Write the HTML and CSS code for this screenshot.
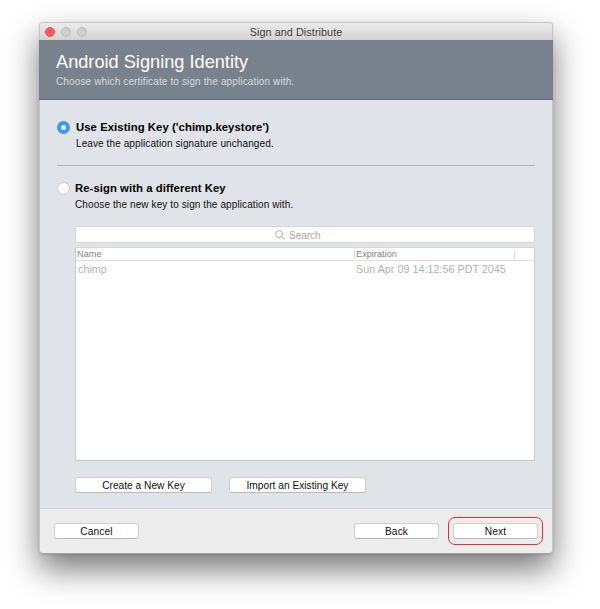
FILE: index.html
```html
<!DOCTYPE html>
<html lang="en">
<head>
<meta charset="utf-8">
<title>Sign and Distribute</title>
<link rel="stylesheet" href="styles.css">
</head>
<body>
<main class="window">
  <div class="titlebar">
    <div class="lights"><span class="light close"></span><span class="light"></span><span class="light"></span></div>
    <span class="title">Sign and Distribute</span>
  </div>
  <header class="header">
    <h1>Android Signing Identity</h1>
    <p>Choose which certificate to sign the application with.</p>
  </header>
  <section class="content">
    <div class="option existing">
      <span class="radio checked"></span>
      <div>
        <h2>Use Existing Key ('chimp.keystore')</h2>
        <p>Leave the application signature unchanged.</p>
      </div>
    </div>
    <hr>
    <div class="option resign">
      <span class="radio"></span>
      <div>
        <h2>Re-sign with a different Key</h2>
        <p>Choose the new key to sign the application with.</p>
      </div>
    </div>
    <div class="keys">
      <div class="search">
        <svg width="10" height="10" viewBox="0 0 10 10" fill="none" stroke="#a6a6a6" stroke-width="0.9"><circle cx="4.1" cy="4.1" r="3.5"/><path d="M6.6 6.6 9.5 9.5"/></svg>
        <span>Search</span>
      </div>
      <div class="table">
        <div class="row head"><span>Name</span><span class="expiration">Expiration</span><span class="end"></span></div>
        <div class="row entry"><span>chimp</span><span class="date">Sun Apr 09 14:12:56 PDT 2045</span></div>
      </div>
      <div class="actions">
        <button class="wide create">Create a New Key</button>
        <button class="wide import">Import an Existing Key</button>
      </div>
    </div>
  </section>
  <footer class="footer">
    <button class="cancel">Cancel</button>
    <button class="back">Back</button>
    <div class="highlight"><button class="next">Next</button></div>
  </footer>
</main>
</body>
</html>
```
FILE: styles.css
```css
* { box-sizing: border-box; }
body {
  margin: 0;
  height: 609px;
  overflow: hidden;
  padding: 22px 0 0 39px;
  background: #fff;
  font-family: "Liberation Sans", Arial, sans-serif;
  color: #111;
}
h1, h2, p { margin: 0; font-weight: normal; white-space: nowrap; }
.window {
  width: 514px;
  height: 532px;
  display: flex;
  flex-direction: column;
  border: 1px solid #c4c5c7;
  border-bottom-color: #a6a6a6;
  border-radius: 4px;
  background: #ececec;
  background-clip: padding-box;
  box-shadow: 0 15px 32px rgba(0, 0, 0, .54), 0 1px 2px rgba(0, 0, 0, .12);
}
.titlebar {
  height: 17px;
  display: grid;
  grid-template-columns: 60px 1fr 60px;
  align-items: center;
  background: linear-gradient(#ececec, #d2d2d2);
  border-radius: 3px 3px 0 0;
}
.lights { display: flex; gap: 6px; padding-left: 5px; }
.light {
  width: 10px;
  height: 10px;
  border-radius: 50%;
  background: #cdcdcd;
  border: 1px solid #bfbfbf;
}
.close { background: #fc5b57; border-color: #f0524f; }
.title { text-align: center; font-size: 10.8px; line-height: 12px; letter-spacing: .08px; color: #404040; }
.header {
  height: 60px;
  margin: 0 -1px;
  padding: 10px 17px 0;
  background: #78828c;
  border-bottom: 1px solid #66717d;
}
.header h1 { font-size: 18.2px; line-height: 24px; color: #fff; }
.header p { margin-top: 1px; font-size: 10px; line-height: 14px; letter-spacing: .13px; color: #d4dadf; }
.content { height: 409px; padding: 20px 17px 0; background: #e0e3e8; border-bottom: 1px solid #d2d4d8; }
.option { display: flex; gap: 6px; }
.radio {
  width: 13px;
  height: 13px;
  margin-top: 1px;
  border: 1px solid #c6c8cb;
  border-radius: 50%;
  background: #fff;
}
.checked { border: 4px solid #3b99fc; }
.option h2 { font-size: 11.3px; line-height: 15px; font-weight: bold; letter-spacing: .07px; color: #000; }
.option p { margin-top: 2px; font-size: 10px; line-height: 14px; letter-spacing: .1px; }
hr { height: 1px; margin: 14px 0 15px; border: 0; background: #b2b6bb; }
.option.resign { gap: 5px; }
.keys { width: 460px; margin: 14px 0 0 18px; }
.search {
  height: 17px;
  display: flex;
  align-items: center;
  padding: 1px 0 0 199px;
  gap: 4px;
  border: 1px solid #d5d7da;
  border-radius: 2px;
  background: #fff;
  font-size: 10px;
  color: #a9a9a9;
}
.table { height: 214px; margin-top: 4px; border: 1px solid #c8cacc; border-top-color: #d6d7d9; background: #fff; }
.row { display: grid; grid-template-columns: 277px 160px 1fr; align-items: center; }
.head { height: 13px; padding-left: 1px; border-bottom: 1px solid #e0e0e0; font-size: 9.2px; line-height: 12px; color: #858585; }
.expiration, .end { height: 9px; line-height: 9px; border-left: 1px solid #dcdcdc; padding-left: 1px; }
.entry { height: 16px; padding-left: 2px; font-size: 10.8px; color: #b3b3b3; }
.date { padding-left: 1px; }
.actions { display: flex; gap: 17px; margin-top: 16px; }
button {
  width: 84px;
  height: 16px;
  padding: 1px 0 0;
  border: 1px solid #cfcfcf;
  border-bottom-color: #b9b9b9;
  border-radius: 3px;
  background: #fff;
  font: 10.2px/13px "Liberation Sans", Arial, sans-serif;
  color: #111;
}
.wide { width: 137px; }
.footer { flex: 1; display: flex; align-items: center; padding: 0 9px 0 14px; }
.footer button { width: 85px; letter-spacing: .1px; }
.footer .cancel { margin-right: auto; }
.highlight {
  width: 95px;
  height: 28px;
  margin-left: 9px;
  display: flex;
  align-items: center;
  justify-content: center;
  border: 1px solid #f22c2c;
  border-radius: 7px;
}
```
